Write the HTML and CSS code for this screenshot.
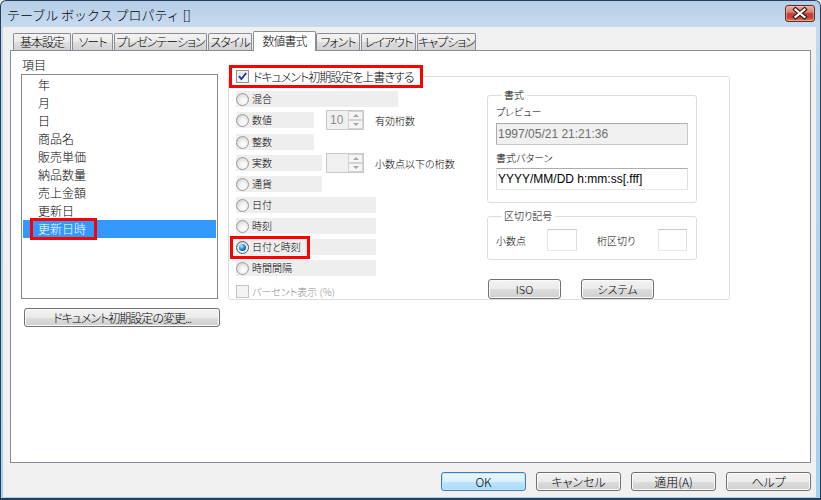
FILE: index.html
```html
<!DOCTYPE html>
<html lang="ja">
<head>
<meta charset="utf-8">
<title>テーブル ボックス プロパティ</title>
<link rel="stylesheet" href="styles.css">
</head>
<body>
<div class="window">
  <div class="titlebar">
    <span class="title">テーブル ボックス プロパティ []</span>
    <span class="close">
      <svg width="28" height="15" viewBox="0 0 28 15">
        <path d="M9.5 3.5 L18.5 11 M18.5 3.5 L9.5 11" stroke="#3a1511" stroke-width="4.4" stroke-linecap="square" fill="none"/>
        <path d="M9.5 3.5 L18.5 11 M18.5 3.5 L9.5 11" stroke="#ffffff" stroke-width="2.2" stroke-linecap="square" fill="none"/>
      </svg>
    </span>
  </div>
  <div class="client">
    <div class="tabs">
      <span class="tab t-basic">基本設定</span>
      <span class="tab t-sort">ソート</span>
      <span class="tab t-pres">プレゼンテーション</span>
      <span class="tab t-style">スタイル</span>
      <span class="tab t-num active">数値書式</span>
      <span class="tab t-font">フォント</span>
      <span class="tab t-layout">レイアウト</span>
      <span class="tab t-cap">キャプション</span>
    </div>
    <div class="panel">
      <div class="col-items">
        <div class="items-label">項目</div>
        <ul class="listbox">
          <li>年</li>
          <li>月</li>
          <li>日</li>
          <li>商品名</li>
          <li>販売単価</li>
          <li>納品数量</li>
          <li>売上金額</li>
          <li>更新日</li>
          <li class="selected">更新日時</li>
        </ul>
        <button class="btn btn-doc">ドキュメント初期設定の変更...</button>
      </div>
      <fieldset class="override">
        <legend class="override-head"><span class="head-inner"><span class="check"><svg width="11" height="11" viewBox="0 0 11 11"><path d="M2 5.2 L4.4 8 L9.2 2" stroke="#1f3f92" stroke-width="1.9" fill="none"/></svg></span>ドキュメント初期設定を上書きする</span></legend>
        <div class="override-body">
          <div class="options">
            <div class="opt"><span class="strip w-mixed"><span class="radio"></span>混合</span></div>
            <div class="opt num">
              <span class="strip w-num"><span class="radio"></span>数値</span>
              <span class="spin spin-num"><span class="spin-val">10</span><span class="spin-btns"><span class="spin-up"></span><span class="spin-down"></span></span></span>
              <span class="spin-label">有効桁数</span>
            </div>
            <div class="opt"><span class="strip w-num"><span class="radio"></span>整数</span></div>
            <div class="opt">
              <span class="strip w-real"><span class="radio"></span>実数</span>
              <span class="spin spin-real"><span class="spin-val"></span><span class="spin-btns"><span class="spin-up"></span><span class="spin-down"></span></span></span>
              <span class="spin-label">小数点以下の桁数</span>
            </div>
            <div class="opt"><span class="strip w-real"><span class="radio"></span>通貨</span></div>
            <div class="opt"><span class="strip w-date"><span class="radio"></span>日付</span></div>
            <div class="opt"><span class="strip w-date"><span class="radio"></span>時刻</span></div>
            <div class="opt marked"><span class="strip w-date"><span class="radio on"></span>日付と時刻</span></div>
            <div class="opt"><span class="strip w-date"><span class="radio"></span>時間間隔</span></div>
            <div class="percent"><span class="check disabled"></span>パーセント表示 (%)</div>
          </div>
          <div class="format-col">
            <fieldset class="group fmt">
              <legend>書式</legend>
              <div class="field-label">プレビュー</div>
              <div class="textbox readonly">1997/05/21 21:21:36</div>
              <div class="field-label second">書式パターン</div>
              <div class="textbox">YYYY/MM/DD h:mm:ss[.fff]</div>
            </fieldset>
            <fieldset class="group sep">
              <legend>区切り記号</legend>
              <div class="sep-row">
                <span class="sep-label l-dec">小数点</span>
                <span class="sepbox"></span>
                <span class="sep-label l-grp">桁区切り</span>
                <span class="sepbox narrow"></span>
              </div>
            </fieldset>
            <div class="fmt-buttons">
              <button class="btn btn-small">ISO</button>
              <button class="btn btn-small">システム</button>
            </div>
          </div>
        </div>
      </fieldset>
    </div>
    <div class="footer">
      <button class="btn default">OK</button>
      <button class="btn">キャンセル</button>
      <button class="btn">適用(A)</button>
      <button class="btn">ヘルプ</button>
    </div>
  </div>
</div>
</body>
</html>
```

FILE: styles.css
```css
*, *::before, *::after { box-sizing: border-box; }
html, body { margin: 0; padding: 0; }
body {
  width: 821px;
  height: 500px;
  overflow: hidden;
  background: #fff;
  font-family: "Noto Sans CJK JP", "Noto Sans", sans-serif;
  font-size: 12px;
  font-weight: 300;
  color: #000;
  font-feature-settings: "palt";
}

/* window frame */
.window {
  width: 821px;
  height: 500px;
  display: flex;
  flex-direction: column;
  border: 1px solid #263f5c;
  border-bottom-width: 2px;
  border-radius: 6px 6px 0 0;
  background: linear-gradient(#b7cee8 0, #c6daef 26px, #bdd6ee 80px, #9fd3f1 100%);
  overflow: hidden;
}
.titlebar {
  flex: none;
  height: 26px;
  display: flex;
  align-items: flex-start;
  justify-content: space-between;
  padding: 4px 5px 0 6px;
}
.title {
  font-size: 13px;
  line-height: 17px;
  font-feature-settings: normal;
  margin-top: 1px;
}
.close {
  width: 30px;
  height: 17px;
  border: 1px solid #5b2b27;
  border-radius: 3px;
  background: linear-gradient(#e8aa9f 0%, #d98273 40%, #c4473a 50%, #c23d30 75%, #dc7d6e 100%);
  box-shadow: inset 0 0 0 1px rgba(255, 220, 210, 0.45);
  display: flex;
  align-items: center;
  justify-content: center;
}

.client {
  flex: 1;
  margin: 0 4px 1px 2px;
  background: #f0f0f0;
  display: flex;
  flex-direction: column;
}

/* tabs */
.tabs {
  display: flex;
  align-items: flex-end;
  height: 20px;
  margin: 4px 0 0 10px;
  position: relative;
  z-index: 1;
}
.tab {
  flex: none;
  height: 17px;
  margin: 0 1px 1px 0;
  border: 1px solid #898c95;
  border-bottom: 0;
  border-radius: 2px 2px 0 0;
  background: linear-gradient(#f3f3f3, #ebebeb 50%, #dedede 51%, #d2d2d2);
  line-height: 15px;
  text-align: center;
  white-space: nowrap;
  letter-spacing: -1px;
  overflow: hidden;
}
.tab.active {
  height: 20px;
  margin: 0;
  padding-top: 1px;
  background: #fff;
}
.t-basic { width: 58px; }
.t-sort { width: 41px; }
.t-pres { width: 93px; }
.t-style { width: 44px; }
.t-num { width: 63px; }
.t-font { width: 44px; }
.t-layout { width: 55px; }
.t-cap { width: 59px; }

/* tab page */
.panel {
  width: 801px;
  height: 413px;
  margin: -1px 0 0 7px;
  border: 1px solid #898c95;
  background: #fff;
  display: flex;
  align-items: flex-start;
  gap: 9px;
  padding: 6px 0 0 10px;
}

.col-items {
  width: 198px;
  flex: none;
  display: flex;
  flex-direction: column;
  align-items: flex-start;
}
.items-label {
  line-height: 15px;
  margin-bottom: 2px;
  padding-left: 1px;
}
.listbox {
  list-style: none;
  margin: 0;
  width: 197px;
  height: 225px;
  border: 1px solid #828790;
  padding: 1px;
  background: #fff;
}
.listbox li {
  height: 18px;
  line-height: 18px;
  padding-left: 15px;
}
.listbox li.selected {
  background: #3399ff;
  color: #fff;
  position: relative;
}
.listbox li.selected::after {
  content: "";
  position: absolute;
  left: 7px;
  top: -2px;
  width: 67px;
  height: 22px;
  border: 3px solid #ff0000;
}

/* buttons */
.btn {
  height: 19px;
  padding: 0;
  border: 1px solid #707070;
  border-radius: 3px;
  background: linear-gradient(#f2f2f2, #ebebeb 50%, #dddddd 51%, #cfcfcf);
  box-shadow: inset 0 0 0 1px #fbfbfb;
  font-family: inherit;
  font-size: 12px;
  font-weight: 300;
  font-feature-settings: "palt";
  line-height: 15px;
  color: #000;
  white-space: nowrap;
}
.btn.default {
  border-color: #3c7fb1;
  background: linear-gradient(#eaf6fd, #d9f0fc 50%, #bee6fd 51%, #a7d9f5);
  box-shadow: inset 0 0 0 1px #c4e5f8;
}
.btn-doc {
  width: 196px;
  margin: 9px 0 0 3px;
  letter-spacing: -1px;
}
.btn-small {
  width: 73px;
  height: 20px;
  font-size: 11px;
}

/* override group */
.override {
  flex: none;
  width: 502px;
  min-width: 0;
  margin: 8px 0 0 0;
  padding: 0;
  border: 1px solid #d5dfe5;
  border-radius: 3px;
}
.override-head {
  padding: 0;
  margin: 0;
  border: 3px solid #ff0000;
}
.head-inner {
  display: flex;
  align-items: center;
  gap: 4px;
  height: 17px;
  padding: 0 7px 0 4px;
  line-height: 17px;
  font-size: 12px;
  letter-spacing: -1px;
  white-space: nowrap;
}
.check {
  flex: none;
  width: 13px;
  height: 13px;
  border: 1px solid #8e8f8f;
  background: linear-gradient(135deg, #dcdcdc, #f7f7f7 70%, #ffffff);
  box-shadow: inset 0 0 0 1px #f2f2f2;
  display: flex;
  align-items: center;
  justify-content: center;
}
.check.disabled {
  border-color: #c4c4c4;
  background: #f4f4f4;
  box-shadow: none;
}

.override-body {
  display: flex;
  align-items: flex-start;
  padding: 3px 0 0 7px;
}
.options {
  width: 251px;
  flex: none;
  display: flex;
  flex-direction: column;
  gap: 5px;
  font-size: 10px;
}
.opt {
  display: flex;
  align-items: center;
  height: 16px;
}
.opt.num { margin-bottom: 1px; }
.opt.marked { position: relative; }
.opt.marked::after {
  content: "";
  position: absolute;
  left: -6px;
  top: -3px;
  width: 80px;
  height: 23px;
  border: 3px solid #ff0000;
}
.strip {
  flex: none;
  display: flex;
  align-items: center;
  height: 16px;
  line-height: 16px;
  background: #eeeeee;
  white-space: nowrap;
}
.w-mixed { width: 162px; }
.w-num { width: 78px; }
.w-real { width: 86px; }
.w-date { width: 140px; }

.radio {
  flex: none;
  position: relative;
  width: 13px;
  height: 13px;
  margin-right: 3px;
  border-radius: 50%;
  border: 1px solid #9a9a9a;
  background: radial-gradient(circle at 60% 65%, #ffffff 0%, #f3f3f3 35%, #d4d4d4 80%, #c8c8c8 100%);
}
.radio.on { border-color: #4d5a66; }
.radio.on::after {
  content: "";
  position: absolute;
  left: 2px;
  top: 2px;
  width: 7px;
  height: 7px;
  border-radius: 50%;
  background: radial-gradient(circle at 35% 30%, #b8ecff 0%, #3fa5e8 35%, #0f5497 75%, #0b3566 100%);
}

.spin {
  flex: none;
  display: flex;
  width: 38px;
  height: 20px;
  border: 1px solid #c9c9c9;
  background: #f0f0f0;
}
.spin-num { margin-left: 12px; }
.spin-real { margin-left: 4px; }
.spin-val {
  flex: 1;
  font-family: "Liberation Sans", Arial, sans-serif;
  font-size: 12px;
  font-weight: 400;
  line-height: 18px;
  color: #8c8c8c;
  padding-left: 3px;
}
.spin-btns {
  width: 15px;
  display: flex;
  flex-direction: column;
}
.spin-up, .spin-down {
  flex: 1;
  border: 1px solid #d2d2d2;
  background: #f5f5f5;
  display: flex;
  align-items: center;
  justify-content: center;
}
.spin-up::before, .spin-down::before {
  content: "";
  border-left: 3px solid transparent;
  border-right: 3px solid transparent;
}
.spin-up::before { border-bottom: 3px solid #a8a8a8; }
.spin-down::before { border-top: 3px solid #a8a8a8; }
.spin-label {
  margin-left: 11px;
  white-space: nowrap;
}
.percent {
  display: flex;
  align-items: center;
  gap: 3px;
  margin-top: 4px;
  height: 13px;
  color: #8d8d8d;
  white-space: nowrap;
}

/* right column */
.format-col {
  width: 210px;
  flex: none;
  margin-top: -1px;
  font-size: 10px;
}
.group {
  margin: 0;
  min-width: 0;
  border: 1px solid #d5dfe5;
  border-radius: 3px;
  padding: 6px 8px 12px 8px;
}
.group legend {
  margin-left: 6px;
  padding: 0 3px 0 2px;
  font-size: 10px;
  line-height: 10px;
}
.field-label {
  line-height: 12px;
  white-space: nowrap;
}
.field-label.second { margin-top: 7px; }
.textbox {
  height: 22px;
  margin-top: 5px;
  border: 1px solid;
  border-color: #abadb3 #dbdfe6 #e3e9ef #e2e3ea;
  background: #fff;
  font-family: "Liberation Sans", Arial, sans-serif;
  font-size: 12px;
  font-weight: 400;
  line-height: 20px;
  padding-left: 1px;
  white-space: nowrap;
  font-feature-settings: normal;
}
.field-label.second + .textbox { margin-top: 4px; }
.textbox.readonly {
  background: #f0f0f0;
  border-color: #acacac #c8c8c8 #c8c8c8 #acacac;
  color: #6d6d6d;
}
.sep {
  margin-top: 8px;
  padding: 8px 8px 8px 8px;
}
.sep-row {
  display: flex;
  align-items: center;
  height: 22px;
}
.sep-label { white-space: nowrap; }
.l-dec { width: 51px; }
.l-grp { width: 61px; margin-left: 20px; }
.sepbox {
  width: 30px;
  height: 22px;
  border: 1px solid;
  border-color: #c5c9cf #dbdfe6 #e3e9ef #e2e3ea;
  background: #fff;
}
.sepbox.narrow { width: 29px; }
.fmt-buttons {
  display: flex;
  gap: 20px;
  margin-top: 19px;
  padding-left: 1px;
}

/* footer */
.footer {
  display: flex;
  justify-content: flex-end;
  gap: 10px;
  margin-top: 9px;
  padding-right: 5px;
}
.footer .btn { width: 85px; }
```
